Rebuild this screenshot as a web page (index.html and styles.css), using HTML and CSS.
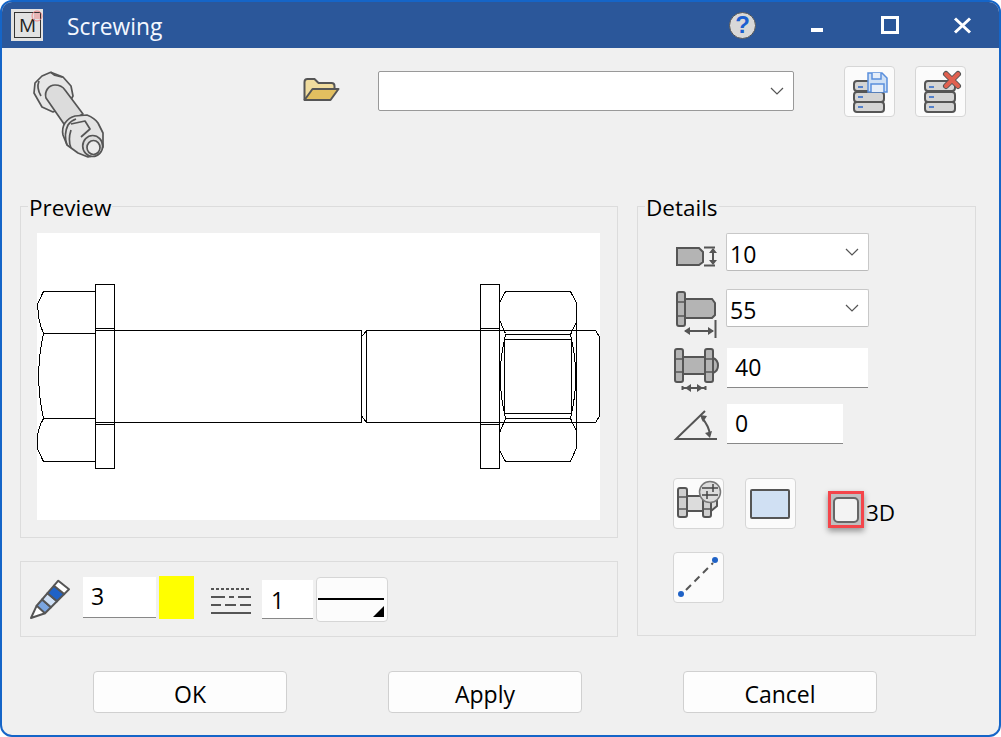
FILE: index.html
```html
<!DOCTYPE html>
<html lang="en">
<head>
  <meta charset="UTF-8" />
  <title>Screwing</title>
  <link rel="stylesheet" href="styles.css">
</head>
<body>
  <div class="window">

    <!-- Title bar -->
    <div class="titlebar">
      <div class="app-icon">
        <span class="app-letter">M</span>
        <svg class="app-badge" viewBox="0 0 12 12"><circle cx="6" cy="6" r="5"/><path d="M3 4h6M3 6h6M3 8h6"/></svg>
      </div>
      <div class="title">Screwing</div>
      <div class="help">?</div>
      <svg class="win-icon" viewBox="790 2 200 46">
        <rect x="811" y="28" width="12" height="4" fill="#fff"/>
        <rect x="882.500" y="17.500" width="15" height="15" fill="none" stroke="#fff" stroke-width="3"/>
        <path d="M955 18.500l15 14M970 18.500l-15 14" stroke="#fff" stroke-width="3" fill="none"/>
      </svg>
    </div>

    <!-- Toolbar -->
    <div class="toolbar">
      <svg class="bolt" viewBox="30 66 80 94">
        <g stroke="#555" stroke-width="1.700" stroke-linejoin="round">
          <path d="M50.700 72.300L63 77l8 9 2 10-5 9-15 7-11-5-8-14 1-10 7-7z" fill="#e6e6e6"/>
          <path d="M39 81c-2 5-1 10 2 15M50.700 72.300l4 3 8 2" fill="none"/>
          <path d="M46 98c-2-7 3-13 9-13 4 0 8 2 10 5l18 24-19 10z" fill="#dcdcdc"/>
          <path d="M63 135c-1-5 0-9 2-12 3-4 6-6 10-7l12-1c5 2 9 5 11 8l5 10v14l-6 8-9 2-10-4-11-8z" fill="#e4e4e4"/>
          <path d="M67 145c-2-6-2-14 1-20 2-3 5-5 8-6M71 148c-2-5-2-12 0-18" fill="none"/>
          <path d="M71 124l14-3 5 8-9 8" fill="none"/>
          <ellipse cx="92.700" cy="146" rx="10" ry="10.500" fill="#dcdcdc"/>
          <ellipse cx="93.500" cy="147.500" rx="6.500" ry="7" fill="#ebebeb"/>
        </g>
      </svg>
      <svg class="folder" viewBox="300 71 42 40">
        <path d="M304.500 100v-18q0-3 3-3h7l4 4h13q3 0 3 3v3" fill="#f0dc9e" stroke="#555" stroke-width="2"/>
        <path d="M304.500 100l8-11h26l-8 11z" fill="#e2bf60" stroke="#555" stroke-width="2" stroke-linejoin="round"/>
      </svg>
      <div class="combo combo-wide">
        <svg class="chevron" viewBox="0 0 14 8"><path d="M1 1l6 6 6-6"/></svg>
      </div>
      <button class="icon-btn save-btn">
        <svg viewBox="844 66 51 51">
          <g fill="#d4d4d4" stroke="#555" stroke-width="2">
            <rect x="854" y="81" width="30" height="10" rx="3"/>
            <rect x="854" y="92" width="30" height="10" rx="3"/>
            <rect x="854" y="102" width="30" height="10" rx="3"/>
          </g>
          <path d="M858 87h5M858 97h5M858 107h5" stroke="#2a66c8" stroke-width="1.500"/>
          <path d="M868 73h14l5 5v14h-19z" fill="#cfe0f5" stroke="#5a8fdc" stroke-width="1.500"/>
          <path d="M872 73v6h9v-6M871 92v-8h13v8" fill="#e6eef9" stroke="#5a8fdc" stroke-width="1.500"/>
        </svg>
      </button>
      <button class="icon-btn">
        <svg viewBox="915 66 51 51">
          <g fill="#d4d4d4" stroke="#555" stroke-width="2">
            <rect x="925" y="81" width="30" height="10" rx="3"/>
            <rect x="925" y="92" width="30" height="10" rx="3"/>
            <rect x="925" y="102" width="30" height="10" rx="3"/>
          </g>
          <path d="M929 87h5M929 97h5M929 107h5" stroke="#2a66c8" stroke-width="1.500"/>
          <path d="M946 74l12 12M958 74l-12 12" stroke="#555" stroke-width="6" stroke-linecap="round"/>
          <path d="M946 74l12 12M958 74l-12 12" stroke="#e0604f" stroke-width="4" stroke-linecap="round"/>
        </svg>
      </button>
    </div>

    <div class="main">
      <div class="left-col">
        <!-- Preview -->
        <div class="group preview-group">
          <div class="group-title">Preview</div>
          <svg class="drawing" viewBox="37 233 563 287" shape-rendering="crispEdges">
            <g fill="none" stroke="#000" stroke-width="1">
              <!-- head -->
              <path d="M95.500 291.500H43.500L38 303Q37 318 43.500 333.500H95.500M43.500 333.500Q34 376 43.500 418.500H95.500M43.500 418.500Q35 433 38 450L43.500 461.500H95.500"/>
              <rect x="95.500" y="284.500" width="19" height="184"/>
              <path d="M95.500 328.500H114.500M95.500 424.500H114.500"/>
              <!-- shank -->
              <path d="M95.500 330.500H361.500V422.500H95.500"/>
              <path d="M366.500 330.500H595.500L599.500 337V416L595.500 422.500H366.500V330.500M366.500 330.500L361.500 337M366.500 422.500L361.500 416"/>
              <!-- washer -->
              <rect x="480.500" y="284.500" width="19" height="184"/>
              <path d="M480.500 328.500H499.500M480.500 424.500H499.500"/>
              <!-- nut -->
              <path d="M505.500 291.500H570.500L576.500 303V448L570.500 461.500H505.500L499.500 450V433L505.500 418.500M505.500 291.500L499.500 303V320L505.500 333.500"/>
              <path d="M505.500 334.500H570.500L576.500 322M505.500 418.500H570.500L576.500 431"/>
              <rect x="504.500" y="339.500" width="67" height="74"/>
              <path d="M504.500 339.500Q496 376 504.500 413.500M571.500 339.500Q580 376 571.500 413.500M505.500 334.500L504.500 339.500M570.500 334.500L571.500 339.500M505.500 418.500L504.500 413.500M570.500 418.500L571.500 413.500"/>
            </g>
          </svg>
        </div>

        <!-- Pen settings -->
        <div class="group pen-group">
          <svg class="pen" viewBox="28 578 44 44">
            <g stroke="#555" stroke-width="2" stroke-linejoin="round">
              <path d="M36.700 605.700L31 618l14-4.700" fill="#fff"/>
              <path d="M42.100 599.500L36.700 605.700 45 613.300 51 607.300z" fill="#7aa5e0"/>
              <path d="M47.500 593.200L42.100 599.500 51 607.300 57 601.300z" fill="#cfe0f5"/>
              <path d="M54 585.700L47.500 593.200 57 601.300 64.200 594.100z" fill="#1f62c6"/>
              <path d="M58.300 580.700L54 585.700 64.200 594.100 69 589.300z" fill="#fff"/>
            </g>
          </svg>
          <div class="field pen-field">3</div>
          <div class="swatch"></div>
          <svg class="line-styles" viewBox="211 586 40 29">
            <g stroke="#555" stroke-width="2">
              <path d="M211 589h40" stroke-dasharray="3 2"/>
              <path d="M211 597h14M229 597h5M238 597h13"/>
              <path d="M211 605h10M225 605h11M240 605h11"/>
              <path d="M211 613h40"/>
            </g>
          </svg>
          <div class="field width-field">1</div>
          <div class="line-btn">
            <svg viewBox="316 578 70 43">
              <rect x="317" y="598" width="66" height="2" fill="#000"/>
              <path d="M372 617l11-11v11z" fill="#000"/>
            </svg>
          </div>
        </div>
      </div>

      <!-- Details -->
      <div class="group details-group">
        <div class="group-title">Details</div>

        <div class="detail-row">
          <svg class="detail-icon" viewBox="673 233 53 38">
            <path d="M677 248h22l4 4v10l-4 3h-22z" fill="#b4b4b4" stroke="#555" stroke-width="2"/>
            <path d="M704 247.500h11M704 265.500h11M713 250v13" stroke="#555" stroke-width="2" fill="none"/>
            <path d="M713 248l-4 5h8zM713 265l-4-5h8z" fill="#555"/>
          </svg>
          <div class="combo combo-small"><span>10</span>
            <svg class="chevron" viewBox="0 0 14 8"><path d="M1 1l6 6 6-6"/></svg>
          </div>
        </div>

        <div class="detail-row row-gap">
          <svg class="detail-icon" viewBox="673 289 53 38">
            <path d="M685 299h27l3 4v12l-3 3h-27z" fill="#b4b4b4" stroke="#555" stroke-width="2"/>
            <rect x="677" y="292" width="8" height="34" rx="2" fill="#b4b4b4" stroke="#555" stroke-width="2"/>
            <path d="M677 302h8M677 316h8" stroke="#555" stroke-width="1.500"/>
            <path d="M715.500 320v18" stroke="#555" stroke-width="2"/>
            <path d="M685 331h28" stroke="#555" stroke-width="2"/>
            <path d="M684 331l6-4v8zM714 331l-6-4v8z" fill="#555"/>
          </svg>
          <div class="combo combo-small"><span>55</span>
            <svg class="chevron" viewBox="0 0 14 8"><path d="M1 1l6 6 6-6"/></svg>
          </div>
        </div>

        <div class="detail-row row-edit">
          <svg class="detail-icon" viewBox="673 348 53 40">
            <rect x="683" y="357" width="22" height="17" fill="#b4b4b4" stroke="#555" stroke-width="2"/>
            <path d="M713 358q5 2 5 7.500t-5 7.500z" fill="#b4b4b4" stroke="#555" stroke-width="2"/>
            <rect x="675" y="349" width="8" height="33" rx="2" fill="#b4b4b4" stroke="#555" stroke-width="2"/>
            <rect x="705" y="349" width="8" height="33" rx="2" fill="#b4b4b4" stroke="#555" stroke-width="2"/>
            <path d="M675 359h8M675 372h8M705 359h8M705 372h8" stroke="#555" stroke-width="1.500"/>
            <path d="M683 388h22M682.500 386v4M705.500 386v4" stroke="#555" stroke-width="2"/>
            <path d="M685 388l6-4v8zM703 388l-6-4v8z" fill="#555"/>
          </svg>
          <div class="field combo-small-field"><span>40</span></div>
        </div>

        <div class="detail-row row-edit">
          <svg class="detail-icon" viewBox="673 404 53 40">
            <path d="M705 411l-29 28h41" fill="none" stroke="#555" stroke-width="2"/>
            <path d="M702 418q7 8 8 17" fill="none" stroke="#555" stroke-width="2"/>
            <path d="M700 415l7 1-4 6zM710 438l-5-5 7-2z" fill="#555"/>
          </svg>
          <div class="field angle-field"><span>0</span></div>
        </div>

        <div class="action-row">
          <button class="icon-btn">
            <svg viewBox="673 478 51 51">
              <path d="M687 496h24l6 4v6l-6 5h-24z" fill="#dcdcdc" stroke="#555" stroke-width="2"/>
              <rect x="678" y="488" width="9" height="29" rx="2" fill="#cfcfcf" stroke="#555" stroke-width="2"/>
              <rect x="703" y="488" width="8" height="29" rx="2" fill="#cfcfcf" stroke="#555" stroke-width="2"/>
              <path d="M678 497h9M678 509h9M703 497h8M703 509h8" stroke="#555" stroke-width="1.500"/>
              <circle cx="710" cy="492" r="10.500" fill="#dcdcdc" stroke="#777" stroke-width="1.500"/>
              <path d="M702 488h16M702 495h16M713 484v8M707 491v8" stroke="#444" stroke-width="1.500"/>
            </svg>
          </button>
          <button class="icon-btn">
            <svg viewBox="745 478 51 51">
              <rect x="751" y="490" width="38" height="28" rx="1" fill="#d0e0f3" stroke="#555" stroke-width="2"/>
            </svg>
          </button>
          <div class="check-highlight"><div class="check-box"></div></div>
          <div class="check-label">3D</div>
        </div>

        <div class="action-row last-row">
          <button class="icon-btn">
            <svg viewBox="673 552 51 51">
              <path d="M686 590l27-27" stroke="#555" stroke-width="2" stroke-dasharray="7 5" fill="none"/>
              <circle cx="681" cy="594" r="3" fill="#1f62c6"/>
              <circle cx="715" cy="560" r="3" fill="#1f62c6"/>
            </svg>
          </button>
        </div>
      </div>
    </div>

    <!-- Footer buttons -->
    <div class="footer">
      <button class="text-btn">OK</button>
      <button class="text-btn">Apply</button>
      <button class="text-btn">Cancel</button>
    </div>
  </div>
</body>
</html>
```

FILE: styles.css
```css
html, body {
  margin: 0;
  padding: 0;
  background: #fff;
  font-family: "Open Sans", "Noto Sans", sans-serif;
  font-size: 22.5px;
  color: #000;
}

.window {
  box-sizing: border-box;
  width: 1001px;
  height: 737px;
  border: 2px solid #1565c8;
  border-radius: 12px;
  background: #f0f0f0;
  overflow: hidden;
}

/* title bar */
.titlebar {
  display: flex;
  align-items: center;
  position: relative;
  height: 46px;
  background: #2b579a;
}

.app-icon {
  position: relative;
  box-sizing: border-box;
  width: 32px;
  height: 32px;
  margin-left: 9px;
  padding: 3px 2px 3px 3px;
  background: #e2e2e2;
}

.app-letter {
  display: block;
  box-sizing: border-box;
  width: 27px;
  height: 26px;
  border: 1px solid #333;
  font-size: 19px;
  line-height: 24px;
  text-align: center;
  color: #222;
}

.app-badge {
  position: absolute;
  top: 1px;
  right: 0;
  width: 12px;
  height: 12px;
  fill: none;
  stroke: #e88;
  stroke-width: 1;
}

.title {
  margin: 2px 0 0 24px;
  color: #f4f8ff;
  font-size: 22.8px;
}

.help {
  position: absolute;
  left: 727px;
  top: 10px;
  box-sizing: border-box;
  width: 27px;
  height: 27px;
  border: 1.5px solid #555;
  border-radius: 50%;
  background: #d8d8d8;
  color: #1a5fd0;
  font-family: "Liberation Sans", sans-serif;
  font-size: 24px;
  font-weight: bold;
  line-height: 24px;
  text-align: center;
}

.win-icon {
  position: absolute;
  left: 788px;
  top: 0;
  width: 200px;
  height: 46px;
}

/* toolbar */
.toolbar {
  display: flex;
  align-items: flex-start;
  box-sizing: border-box;
  height: 158px;
  padding-top: 18px;
}

.bolt {
  width: 80px;
  height: 94px;
  margin-left: 28px;
}

.folder {
  width: 42px;
  height: 40px;
  margin-top: 5px;
  margin-left: 190px;
}

.combo {
  display: flex;
  align-items: center;
  justify-content: space-between;
  box-sizing: border-box;
  background: #fff;
  border: 1px solid #c8c8c8;
  border-radius: 2px;
}

.combo-wide {
  justify-content: flex-end;
  width: 416px;
  height: 40px;
  margin-top: 5px;
  margin-left: 36px;
  padding-right: 9px;
  border-color: #999;
}

.combo-small {
  width: 143px;
  height: 38px;
  padding: 0 9px 0 3px;
  border-bottom-color: #bbb;
  font-size: 23px;
}

.combo-small span {
  padding-top: 3px;
}

.chevron {
  width: 14px;
  height: 8px;
  fill: none;
  stroke: #555;
  stroke-width: 1.2;
}

.icon-btn {
  box-sizing: border-box;
  width: 51px;
  height: 51px;
  padding: 0;
  background: #fbfbfb;
  border: 1px solid #d6d6d6;
  border-radius: 4px;
}

.icon-btn svg {
  display: block;
  width: 51px;
  height: 51px;
  margin: -1px;
}

.save-btn {
  margin-left: 50px;
  margin-right: 20px;
}

/* main area */
.main {
  display: grid;
  grid-template-columns: 598px 339px;
  column-gap: 19px;
  padding-left: 18px;
}

.left-col {
  display: flex;
  flex-direction: column;
  gap: 23px;
}

.group {
  box-sizing: border-box;
  border: 1px solid #dcdcdc;
}

.group-title {
  width: fit-content;
  margin-top: -14px;
  margin-bottom: 10px;
  padding: 0 1px;
  background: #f0f0f0;
  line-height: 30px;
}

.preview-group {
  height: 332px;
  padding: 0 16px;
}

.preview-group .group-title {
  margin-left: -9px;
}

.drawing {
  display: block;
  width: 563px;
  height: 287px;
  background: #fff;
}

.pen-group {
  display: flex;
  align-items: flex-start;
  height: 76px;
}

.pen {
  width: 44px;
  height: 44px;
  margin: 16px 0 0 7px;
}

.field {
  box-sizing: border-box;
  background: #fff;
  border-bottom: 1px solid #888;
  font-size: 23px;
  line-height: 38px;
}

.pen-field {
  width: 73px;
  height: 41px;
  margin: 15px 0 0 11px;
  padding-left: 8px;
}

.swatch {
  width: 35px;
  height: 43px;
  margin: 14px 0 0 3px;
  background: #ff0;
}

.line-styles {
  width: 40px;
  height: 29px;
  margin: 24px 0 0 17px;
}

.width-field {
  width: 51px;
  height: 39px;
  margin: 18px 0 0 11px;
  padding-left: 9px;
  line-height: 40px;
}

.line-btn {
  box-sizing: border-box;
  width: 72px;
  height: 45px;
  margin: 15px 0 0 3px;
  background: #fcfcfc;
  border: 1px solid #d6d6d6;
  border-radius: 4px;
}

.line-btn svg {
  display: block;
  width: 70px;
  height: 43px;
}

/* details */
.details-group {
  height: 430px;
  padding-left: 35px;
}

.details-group .group-title {
  margin-left: -28px;
}

.detail-row {
  display: flex;
  align-items: flex-start;
  height: 38px;
  margin-bottom: 18px;
}

.row-gap {
  margin-bottom: 21px;
}

.row-edit {
  height: 40px;
  margin-bottom: 16px;
}

.detail-icon {
  flex: none;
  width: 53px;
  height: 100%;
  overflow: visible;
}

.combo-small-field,
.angle-field {
  height: 40px;
  margin-left: 1px;
  padding-left: 8px;
}

.combo-small-field {
  width: 141px;
}

.angle-field {
  width: 116px;
}

.action-row {
  display: flex;
  align-items: flex-start;
  gap: 21px;
  margin-top: 34px;
}

.last-row {
  margin-top: 23px;
}

.check-highlight {
  display: flex;
  align-items: center;
  justify-content: center;
  box-sizing: border-box;
  width: 36px;
  height: 37px;
  margin-top: 13px;
  margin-left: 11px;
  margin-right: -19px;
  border: 3px solid #f4454a;
  background: #c0c0c0;
  box-shadow: 0 3px 6px rgba(0, 0, 0, 0.4);
}

.check-box {
  box-sizing: border-box;
  width: 26px;
  height: 26px;
  border: 2px solid #666;
  border-radius: 5px;
  background: #f3f3f3;
}

.check-label {
  margin-top: 21px;
  line-height: 28px;
}

/* footer */
.footer {
  display: flex;
  gap: 101px;
  padding: 34px 0 0 91px;
}

.text-btn {
  box-sizing: border-box;
  width: 194px;
  height: 42px;
  padding: 3px 0 0;
  background: #fdfdfd;
  border: 1px solid #d0d0d0;
  border-radius: 4px;
  font-family: inherit;
  font-size: 23px;
  color: #000;
}
```
